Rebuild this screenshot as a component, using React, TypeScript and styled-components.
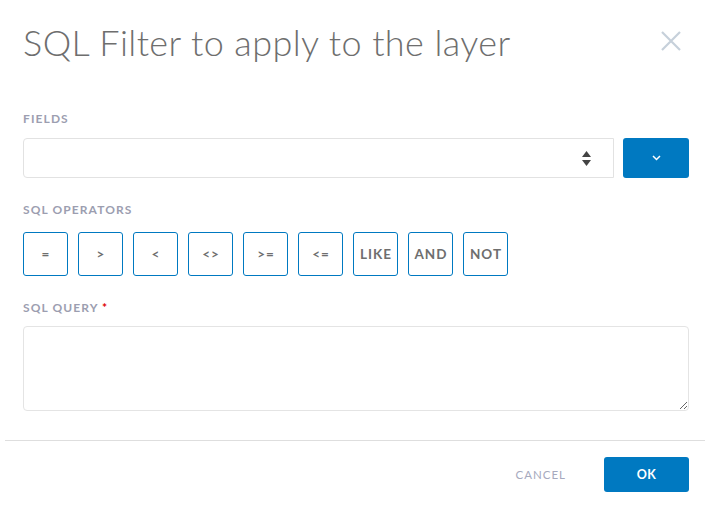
import styled, { createGlobalStyle } from 'styled-components'

const GlobalStyle = createGlobalStyle`
  html, body {
    margin: 0;
    padding: 0;
    background: #fff;
  }
  body {
    font-family: Lato, "Open Sans", sans-serif;
  }
`

const OPERATORS = ['=', '>', '<', '<>', '>=', '<=', 'LIKE', 'AND', 'NOT']

export default function App() {
  return (
    <>
      <GlobalStyle />
      <StyledDialog>
        <DialogHeader>
          <DialogTitle>SQL Filter to apply to the layer</DialogTitle>
          <CloseButton aria-label="close">
            <svg width="20" height="20" viewBox="0 0 20 20">
              <path d="M1 1 L19 19 M19 1 L1 19" stroke="#c6d0da" strokeWidth="2.2" fill="none" />
            </svg>
          </CloseButton>
        </DialogHeader>

        <DialogBody>
          <FieldLabel $gap={11}>FIELDS</FieldLabel>
          <FieldRow>
            <SelectBox>
              <svg width="9" height="15" viewBox="0 0 9 15">
                <path d="M4.5 0 L9 6 H0 Z" fill="#444" />
                <path d="M0 9 H9 L4.5 15 Z" fill="#444" />
              </svg>
            </SelectBox>
            <DropButton aria-label="open fields">
              <svg width="9" height="6" viewBox="0 0 9 6">
                <path d="M1 1 L4.5 4.5 L8 1" stroke="#fff" strokeWidth="1.5" fill="none" />
              </svg>
            </DropButton>
          </FieldRow>

          <FieldLabel $gap={14} $top={24}>SQL OPERATORS</FieldLabel>
          <OperatorList>
            {OPERATORS.map(op => (
              <OperatorButton key={op}>{op}</OperatorButton>
            ))}
          </OperatorList>

          <FieldLabel $gap={10} $top={24}>
            SQL QUERY <Required>*</Required>
          </FieldLabel>
          <QueryInput />
        </DialogBody>

        <DialogFooter>
          <CancelButton>CANCEL</CancelButton>
          <OkButton>OK</OkButton>
        </DialogFooter>
      </StyledDialog>
    </>
  )
}

const StyledDialog = styled('section')`
  margin: 0 6px 0 5px;
  width: 700px;
  height: 506px;
  background: #fff;
`

const DialogHeader = styled('header')`
  display: flex;
  align-items: center;
  justify-content: space-between;
  padding: 20px 24px 0 18px;
  height: 48px;
`

const DialogTitle = styled('h1')`
  margin: 0;
  margin-top: -4px;
  font-family: Lato, sans-serif;
  font-weight: 300;
  font-size: 36px;
  line-height: 48px;
  color: #6e6e6e;
  letter-spacing: 0.4px;
`

const CloseButton = styled('button')`
  border: 0;
  padding: 0;
  background: none;
  width: 20px;
  height: 20px;
  margin-top: -6px;
  cursor: pointer;
`

const DialogBody = styled('div')`
  padding: 43px 16px 29px 18px;
  border-bottom: 1px solid #dedede;
`

const FieldLabel = styled('div')<{ $gap: number; $top?: number }>`
  font-family: Lato, sans-serif;
  font-weight: 700;
  font-size: 12px;
  line-height: 16px;
  letter-spacing: 1.1px;
  color: #9c9eb0;
  margin-top: ${({ $top }) => $top || 0}px;
  margin-bottom: ${({ $gap }) => $gap}px;
`

const Required = styled('span')`
  color: #d00;
`

const FieldRow = styled('div')`
  display: flex;
  gap: 9px;
`

const SelectBox = styled('div')`
  flex: 1;
  height: 40px;
  box-sizing: border-box;
  border: 1px solid #e2e2e2;
  border-radius: 4px 0 0 4px;
  display: flex;
  align-items: center;
  justify-content: flex-end;
  padding-right: 22px;
`

const DropButton = styled('button')`
  width: 66px;
  height: 40px;
  border: 0;
  border-radius: 3px;
  background: #0079c1;
  display: flex;
  align-items: center;
  justify-content: center;
  cursor: pointer;
`

const OperatorList = styled('div')`
  display: flex;
  gap: 10px;
`

const OperatorButton = styled('button')`
  width: 45px;
  height: 44px;
  box-sizing: border-box;
  border: 1px solid #0079c1;
  border-radius: 3px;
  background: #fff;
  padding: 0 0 0 1px;
  font-family: Lato, sans-serif;
  font-weight: 700;
  font-size: 13.5px;
  letter-spacing: 1px;
  color: #6e6e6e;
  cursor: pointer;
`

const QueryInput = styled('textarea')`
  display: block;
  width: 100%;
  height: 85px;
  box-sizing: border-box;
  border: 1px solid #e4e4e4;
  border-radius: 4px;
  resize: vertical;
  outline: none;
`

const DialogFooter = styled('footer')`
  display: flex;
  justify-content: flex-end;
  align-items: center;
  gap: 38px;
  padding: 16px 16px 0 0;
`

const CancelButton = styled('button')`
  border: 0;
  background: none;
  padding: 0;
  font-family: Lato, sans-serif;
  font-size: 11.5px;
  letter-spacing: 1px;
  color: #a6a9bd;
  cursor: pointer;
`

const OkButton = styled('button')`
  width: 85px;
  height: 35px;
  border: 0;
  border-radius: 3px;
  background: #0079c1;
  color: #fff;
  font-family: Lato, sans-serif;
  font-weight: 700;
  font-size: 12.5px;
  letter-spacing: 0.5px;
  cursor: pointer;
`
